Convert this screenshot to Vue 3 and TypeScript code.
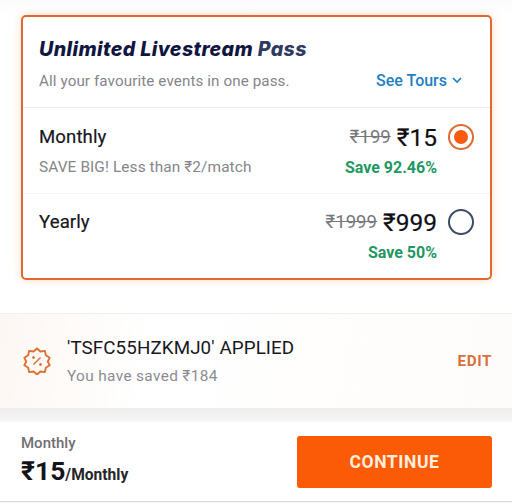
<script setup lang="ts">
interface Plan { name: string; note?: string; old: string; price: string; save: string; selected: boolean }
const plans: Plan[] = [
  { name: 'Monthly', note: 'SAVE BIG! Less than ₹2/match', old: '₹199', price: '₹15', save: 'Save 92.46%', selected: true },
  { name: 'Yearly', old: '₹1999', price: '₹999', save: 'Save 50%', selected: false },
]
</script>

<template>
  <div class="page">
    <main class="top">
      <section class="card">
        <header class="head">
          <h1 class="title">Unlimited Livestream <span>Pass</span></h1>
          <div class="head-row">
            <span class="sub">All your favourite events in one pass.</span>
            <span class="tours">See Tours
              <svg width="10" height="7" viewBox="0 0 10 7"><path d="M1 1l4 4 4-4" fill="none" stroke="#1f7fc4" stroke-width="1.6" /></svg>
            </span>
          </div>
        </header>
        <div v-for="p in plans" :key="p.name" class="plan">
          <div class="plan-main">
            <div class="plan-name">{{ p.name }}</div>
            <div class="prices">
              <s class="old">{{ p.old }}</s>
              <span class="price">{{ p.price }}</span>
            </div>
            <span class="radio" :class="{ on: p.selected }"></span>
          </div>
          <div class="plan-sub">
            <span class="note">{{ p.note }}</span>
            <span class="save">{{ p.save }}</span>
          </div>
        </div>
      </section>
    </main>
    <section class="coupon">
      <svg class="badge" width="28" height="28" viewBox="0 0 28 28" fill="none" stroke="#dd7033" stroke-width="1.9" stroke-linejoin="round">
        <path d="M14 1.5l3.4 3 4.5-.6.9 4.4 3.9 2.4-1.9 3.8 1.9 3.8-3.9 2.4-.9 4.4-4.5-.6-3.4 3-3.4-3-4.5.6-.9-4.4-3.9-2.4 1.9-3.8-1.9-3.8 3.9-2.4.9-4.4 4.5.6z" />
        <path d="M10.5 17.5l7-7" stroke-width="1.5" />
        <circle cx="10.5" cy="10.5" r="1" fill="#dd7033" stroke-width="1" />
        <circle cx="17.5" cy="17.5" r="1" fill="#dd7033" stroke-width="1" />
      </svg>
      <div class="coupon-text">
        <div class="code">'TSFC55HZKMJ0' APPLIED</div>
        <div class="saved">You have saved ₹184</div>
      </div>
      <span class="edit">EDIT</span>
    </section>
    <footer class="footer">
      <div class="summary">
        <div class="sum-label">Monthly</div>
        <div class="sum-price">₹15<span>/Monthly</span></div>
      </div>
      <button class="cta" type="button">CONTINUE</button>
    </footer>
  </div>
</template>

<style scoped>
.page {
  width: 512px;
  height: 503px;
  display: flex;
  flex-direction: column;
  background: linear-gradient(#fff 400px, #eeeeee 410px, #f6f6f6 422px);
  font-family: Roboto, "Noto Sans", sans-serif;
  overflow: hidden;
}
.top {
  padding: 15px 20px 0 21px;
  height: 313px;
  box-sizing: border-box;
  flex: none;
  background: linear-gradient(#fbfbfb, #fff 14px);
}
.card {
  height: 265px;
  box-sizing: border-box;
  border: 2px solid #e0692f;
  border-radius: 5px;
  background: #fff;
  box-shadow: 0 0 9px rgba(240, 130, 60, 0.28);
}
.head {
  height: 91px;
  box-sizing: border-box;
  padding: 20px 28px 0 16px;
  border-bottom: 1px solid #ececec;
}
.title {
  margin: 0;
  font-family: Inter, Roboto, sans-serif;
  font-size: 19.6px;
  line-height: 24px;
  font-weight: 800;
  font-style: italic;
  letter-spacing: 0.4px;
  color: #10163f;
}
.title span { color: #2f3a60; }
.head-row {
  display: flex;
  justify-content: space-between;
  align-items: center;
  margin-top: 10px;
}
.sub { font-size: 15.2px; line-height: 18px; color: #85858a; letter-spacing: 0.1px; }
.tours {
  font-size: 16px;
  font-weight: 500;
  color: #1f7fc4;
  display: flex;
  align-items: center;
  gap: 5px;
}
.plan {
  height: 86px;
  box-sizing: border-box;
  padding: 15px 16px 0 16px;
}
.plan + .plan { border-top: 1px solid #f3f3f3; padding-top: 14px; }
.plan:first-of-type { height: 85px; }
.plan-main {
  display: flex;
  align-items: center;
  height: 28px;
}
.plan-name { flex: 1; font-size: 18.6px; font-weight: 400; color: #17171c; letter-spacing: 0.1px; -webkit-text-stroke: 0.2px #17171c; }
.prices { display: flex; align-items: center; gap: 6px; }
.old { font-size: 18.6px; color: #77777c; }
.price { font-size: 24.5px; font-weight: 400; color: #101014; -webkit-text-stroke: 0.2px #101014; }
.radio {
  width: 22px;
  height: 22px;
  margin-left: 11px;
  border: 2px solid #3d4a60;
  border-radius: 50%;
  box-sizing: content-box;
  flex: none;
  display: flex;
  align-items: center;
  justify-content: center;
}
.radio.on { border-color: #dd6a30; }
.radio.on::after {
  content: "";
  width: 14px;
  height: 14px;
  border-radius: 50%;
  background: #f95a10;
}
.plan-sub {
  display: flex;
  justify-content: space-between;
  align-items: center;
  margin-top: 7px;
  padding-right: 37px;
  height: 18px;
}
.note { font-size: 15.4px; color: #85858a; letter-spacing: 0.1px; }
.save { font-size: 16px; font-weight: 700; color: #1f9863; }
.coupon {
  flex: none;
  height: 96px;
  box-sizing: border-box;
  display: flex;
  align-items: center;
  padding: 0 21px 0 23px;
  border-top: 1px solid #f0f0f0;
  border-bottom: 1px solid #ececec;
  background: linear-gradient(100deg, #fdf7f3, #fff 30%, #fefcfa);
}
.badge { flex: none; margin-right: 16px; }
.coupon-text { flex: 1; }
.code { font-size: 18.8px; line-height: 22px; color: #18181c; letter-spacing: 0.1px; }
.saved { margin-top: 8px; font-size: 15.4px; line-height: 18px; color: #8c8c90; letter-spacing: 0.35px; }
.edit { font-size: 15.2px; font-weight: 700; color: #d9703a; letter-spacing: 0.6px; margin-right: -1px; }
.footer {
  flex: none;
  margin-top: 13px;
  height: 80px;
  box-sizing: border-box;
  display: flex;
  align-items: center;
  justify-content: space-between;
  padding: 0 20px 0 21px;
  border-bottom: 1px solid #dcdcdc;
  background: #fff;
}
.summary { display: flex; flex-direction: column; }
.sum-label { font-size: 15px; line-height: 18px; font-weight: 500; color: #6f6f73; }
.sum-price { margin-top: 4px; font-size: 26.5px; line-height: 30px; font-weight: 700; color: #141418; }
.sum-price span { font-size: 15.6px; font-weight: 700; color: #26262a; }
.cta {
  width: 195px;
  height: 52px;
  border: 0;
  border-radius: 3px;
  background: #fb5a06;
  color: #ffeede;
  font-family: Roboto, sans-serif;
  font-size: 17.5px;
  font-weight: 700;
  letter-spacing: 0.6px;
}
</style>

<style>
body { background: #fff; }
</style>
